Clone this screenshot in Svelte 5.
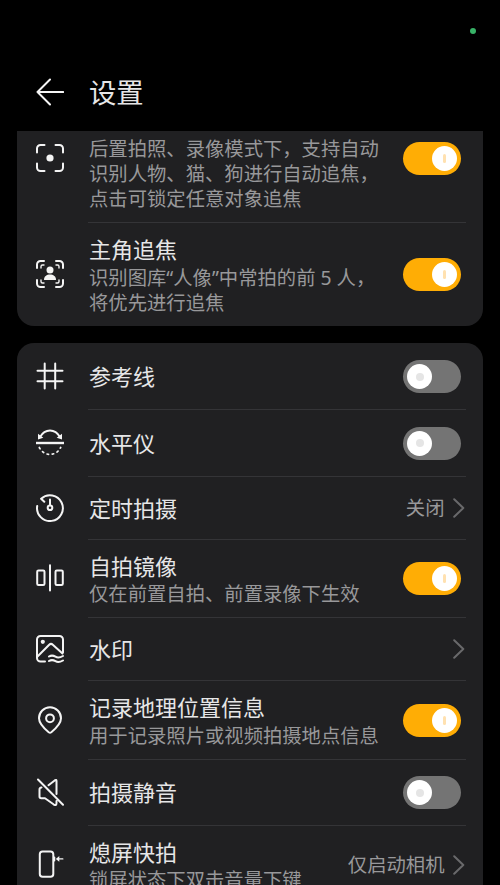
<script>
  const groups = [
    [
      { icon: 'focus', lines: ['后置拍照、录像模式下，支持自动', '识别人物、猫、狗进行自动追焦，', '点击可锁定任意对象追焦'], on: true, h: 128 },
      { icon: 'person', title: '主角追焦', lines: ['识别图库“人像”中常拍的前 5 人，', '将优先进行追焦'], on: true, h: 104 },
    ],
    [
      { icon: 'grid', title: '参考线', on: false, h: 66 },
      { icon: 'level', title: '水平仪', on: false, h: 67 },
      { icon: 'timer', title: '定时拍摄', value: '关闭', h: 63 },
      { icon: 'mirror', title: '自拍镜像', lines: ['仅在前置自拍、前置录像下生效'], on: true, h: 78 },
      { icon: 'watermark', title: '水印', value: '', h: 63 },
      { icon: 'pin', title: '记录地理位置信息', lines: ['用于记录照片或视频拍摄地点信息'], on: true, h: 79 },
      { icon: 'mute', title: '拍摄静音', on: false, h: 66 },
      { icon: 'snap', title: '熄屏快拍', lines: ['锁屏状态下双击音量下键'], value: '仅启动相机', h: 78 },
    ],
  ];
</script>

<main>
  <div class="status"><span class="dot"></span></div>
  <header>
    <svg class="back" width="28" height="28" viewBox="0 0 28 28"><path d="M27.2 14H1.5M14 1.5 1.5 14 14 26.5" /></svg>
    <h1>设置</h1>
  </header>
  <div class="scroll">
    {#each groups as rows}
      <section>
        {#each rows as row, i}
          <div class="row" style:height="{row.h}px">
            <svg class="icon" width="28" height="28" viewBox="0 0 28 28">
              {#if row.icon === 'focus'}
                <path d="M1 8.500V4.500A3.500 3.500 0 0 1 4.500 1H8.500M19.500 1h4A3.500 3.500 0 0 1 27 4.500V8.500M27 19.500v4a3.500 3.500 0 0 1-3.500 3.500H19.500M8.500 27H4.500A3.500 3.500 0 0 1 1 23.500V19.500" />
                <circle class="solid" cx="14" cy="14" r="3.600" />
              {:else if row.icon === 'person'}
                <path d="M1 8V4.500A3.500 3.500 0 0 1 4.500 1H8M20 1h3.500A3.500 3.500 0 0 1 27 4.500V8M27 20v3.500a3.500 3.500 0 0 1-3.500 3.500H20M8 27H4.500A3.500 3.500 0 0 1 1 23.500V20" />
                <path class="thin" d="M5 8V6.500A1.500 1.500 0 0 1 6.500 5H8M20 5h1.500A1.500 1.500 0 0 1 23 6.500V8M23 20v1.500a1.500 1.500 0 0 1-1.500 1.500H20M8 23H6.500A1.500 1.500 0 0 1 5 21.500V20" />
                <circle class="solid" cx="14" cy="10" r="3.500" />
                <path class="solid" d="M8 19.500c0-3 2.700-5 6-5s6 2 6 5q0 .6-.6.600H8.600Q8 20.100 8 19.500Z" />
              {:else if row.icon === 'grid'}
                <path d="M8.700 1.500v25M19.200 1.500v25M1.500 8.700h25M1.500 19.300h25" />
              {:else if row.icon === 'level'}
                <path class="bold" d="M0 14h28" />
                <path d="M4 8C9-.7 19-.7 24 8" />
                <path class="solid" d="M2 4.800v5.700l5.300-1.700ZM26 4.800v5.700l-5.300-1.700Z" />
                <path class="dash" d="M3.300 18.500C8 27.700 20 27.700 24.700 18.500" />
              {:else if row.icon === 'timer'}
                <path d="M1.200 12A12.900 12.900 0 1 0 5.100 4.700L8.300 7.800M14 5.500v5.500" />
                <circle cx="14" cy="13.800" r="2.300" />
              {:else if row.icon === 'mirror'}
                <rect x="1.200" y="6.500" width="7.300" height="14.500" rx="1.300" />
                <rect x="19.500" y="6.500" width="7.300" height="14.500" rx="1.300" />
                <path d="M14 1.300v25.200" />
              {:else if row.icon === 'watermark'}
                <path d="M9 26.500H4.500A3.500 3.500 0 0 1 1 23V4.500A3.500 3.500 0 0 1 4.500 1h19A3.500 3.500 0 0 1 27 4.500V17.500M1.500 21.500 13.200 9.700Q15 8 16.800 9.700L26.500 18.500" />
                <circle class="solid" cx="6.800" cy="6.800" r="2.100" />
                <path d="M13 21.500c2.500-1.500 4.500-1 6.500.2s4.500 1 7.500-.7M13 26c2.500-1.500 4.500-1 6.500.2s4.500 1 7.500-.7" />
              {:else if row.icon === 'pin'}
                <path d="M15.300 26.300Q14 27.300 12.700 26.300C9 23.200 3 17.500 3 12.300a11 11 0 0 1 22 0C25 17.500 19 23.200 15.300 26.300Z" />
                <circle cx="14" cy="12.300" r="3.900" />
              {:else if row.icon === 'mute'}
                <path d="M2 1.500l25 25.200M12.500 7.200L19 2.200Q20.500 1.300 20.500 3V16M5.500 9.500Q3.500 9.800 3.500 11.500v7q0 1.800 1.800 1.800H9L17.500 26.300Q20.500 28.300 20.500 25V23" />
              {:else}
                <rect x="3.800" y="1.500" width="13.500" height="25.300" rx="2.800" />
                <path d="M18.300 7.500v3" />
                <path class="thin" d="M22 8.900h4.800" />
                <path class="solid" d="M19.800 8.900l3.500-2.800v5.600Z" />
              {/if}
            </svg>
            <div class="body" class:first={i === 0}>
              <div class="text">
                <div class="title">{row.title ?? ''}</div>
                {#each row.lines ?? [] as line}<div class="sub">{line}</div>{/each}
              </div>
              {#if row.on !== undefined}
                <div class="switch" class:on={row.on}><span class="knob"><i></i></span></div>
              {:else}
                <span class="value">{row.value}</span>
                <svg class="chevron" width="12" height="20" viewBox="0 0 12 20"><path d="M1.200 1.200 10.300 10l-9.100 8.800" /></svg>
              {/if}
            </div>
          </div>
        {/each}
      </section>
    {/each}
  </div>
</main>

<style>
  :global(body) { margin: 0; background: #000; }
  main {
    width: 500px; height: 885px; overflow: hidden;
    display: flex; flex-direction: column;
    background: #000; color: #e6e6e7;
    font-family: "Noto Sans", "Noto Sans CJK SC", sans-serif;
  }
  .status { height: 62px; flex: none; display: flex; justify-content: flex-end; box-sizing: border-box; padding: 28px 24px 0 0; }
  .dot { width: 6px; height: 6px; border-radius: 50%; background: #38b267; }
  header { height: 69px; flex: none; display: flex; align-items: flex-start; gap: 25px; padding-left: 36px; }
  .back { margin-top: 16px; }
  h1 { margin: 11px 0 0; font-size: 27.300px; line-height: 40px; font-weight: 400; color: #e6e6e7; }
  .scroll { flex: 1; min-height: 0; overflow: hidden; display: flex; flex-direction: column; gap: 17px; padding: 0 17px; }
  section { flex: none; background: #202022; border-radius: 17px; }
  section:first-child { margin-top: -37px; }
  .row { display: flex; align-items: center; padding: 0 17px 0 19px; }
  svg { flex: none; fill: none; stroke: #f4f4f4; stroke-width: 2; stroke-linecap: round; stroke-linejoin: round; }
  .thin { stroke-width: 1.400; }
  .bold { stroke-width: 2.400; stroke-linecap: butt; }
  .solid { fill: #f4f4f4; stroke: none; }
  .dash { stroke-width: 1.700; stroke-dasharray: 1.500 3.700; }
  .body { flex: 1; height: 100%; margin-left: 24px; padding: 0 5px 0 1px; box-sizing: border-box; display: flex; align-items: center; border-top: 1px solid #343437; }
  .body.first { border-top-color: transparent; }
  .text { flex: 1; white-space: nowrap; }
  .title { height: 30.600px; line-height: 30.600px; font-size: 22px; }
  .sub { height: 25.300px; line-height: 25.300px; font-size: 19.330px; color: #98989a; }
  .switch { width: 58px; height: 33px; border-radius: 17px; box-sizing: border-box; padding: 4px; background: #747474; display: flex; flex: none; }
  .switch.on { background: #ffad05; justify-content: flex-end; }
  .knob { width: 25px; height: 25px; border-radius: 50%; background: #fff; display: flex; align-items: center; justify-content: center; }
  .knob i { width: 8px; height: 8px; border-radius: 50%; background: #e5e5e5; }
  .on .knob i { width: 3px; height: 9px; border-radius: 2px; background: #ffe1b0; }
  .value { font-size: 19.330px; line-height: 26px; color: #98989a; margin-right: 8px; }
  .chevron { stroke: #69696b; stroke-width: 2; margin-right: -3.500px; }
</style>
